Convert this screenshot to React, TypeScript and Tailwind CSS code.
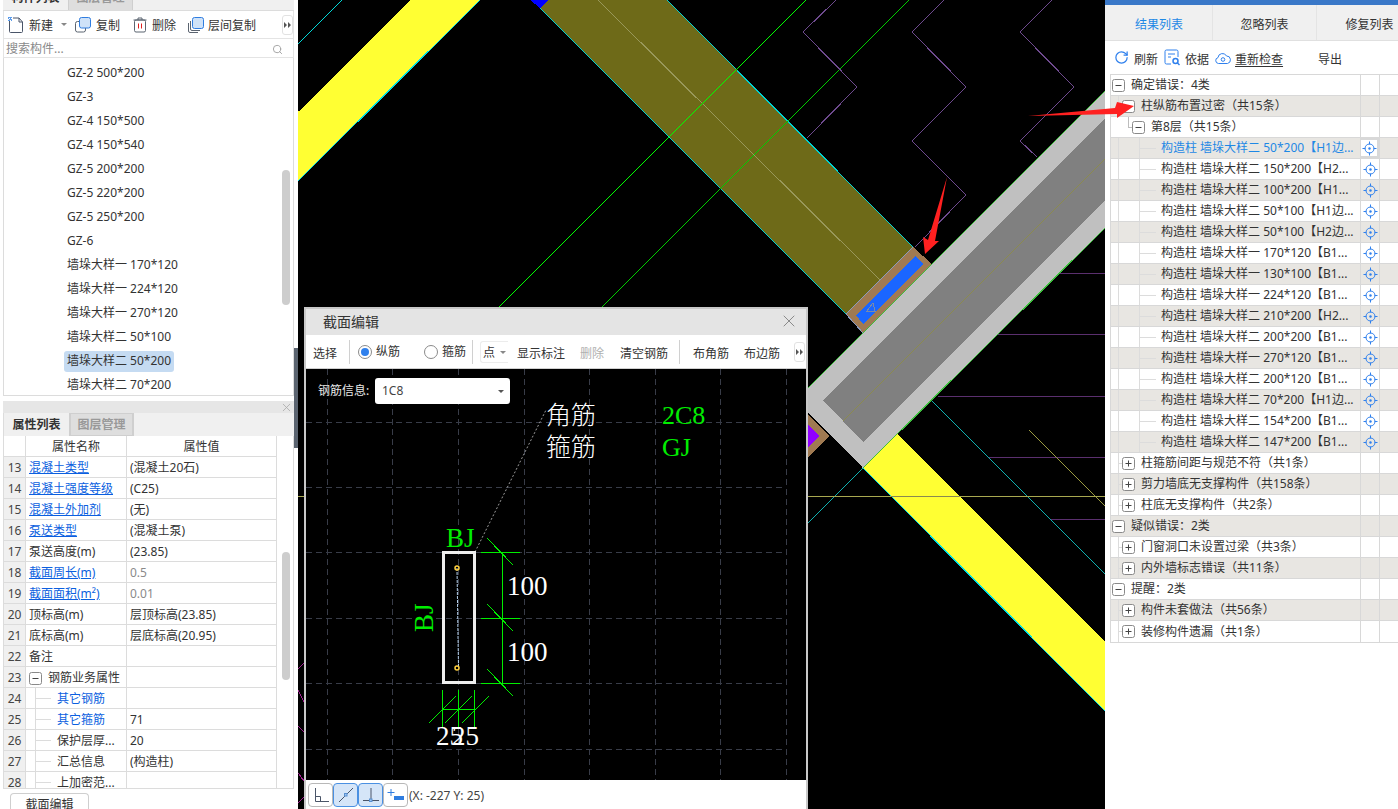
import * as React from 'react'
import { RotateCw, Search, X } from 'lucide-react'

const components = [
  'GZ-2 500*200',
  'GZ-3',
  'GZ-4 150*500',
  'GZ-4 150*540',
  'GZ-5 200*200',
  'GZ-5 220*200',
  'GZ-5 250*200',
  'GZ-6',
  '墙垛大样一 170*120',
  '墙垛大样一 224*120',
  '墙垛大样一 270*120',
  '墙垛大样二 50*100',
  '墙垛大样二 50*200',
  '墙垛大样二 70*200',
]

type Prop = {
  no: number
  name: string
  value?: string
  kind?: 'link' | 'blue'
  muted?: boolean
  indent?: boolean
  box?: boolean
}

const props: Prop[] = [
  { no: 13, name: '混凝土类型', value: '(混凝土20石)', kind: 'link' },
  { no: 14, name: '混凝土强度等级', value: '(C25)', kind: 'link' },
  { no: 15, name: '混凝土外加剂', value: '(无)', kind: 'link' },
  { no: 16, name: '泵送类型', value: '(混凝土泵)', kind: 'link' },
  { no: 17, name: '泵送高度(m)', value: '(23.85)' },
  { no: 18, name: '截面周长(m)', value: '0.5', kind: 'link', muted: true },
  { no: 19, name: '截面面积(m²)', value: '0.01', kind: 'link', muted: true },
  { no: 20, name: '顶标高(m)', value: '层顶标高(23.85)' },
  { no: 21, name: '底标高(m)', value: '层底标高(20.95)' },
  { no: 22, name: '备注' },
  { no: 23, name: '钢筋业务属性', box: true },
  { no: 24, name: '其它钢筋', kind: 'blue', indent: true },
  { no: 25, name: '其它箍筋', value: '71', kind: 'blue', indent: true },
  { no: 26, name: '保护层厚...', value: '20', indent: true },
  { no: 27, name: '汇总信息', value: '(构造柱)', indent: true },
  { no: 28, name: '上加密范...', indent: true },
]

type TreeRow = { level: number; label: string; box?: '+' | '-'; active?: boolean }

const treeRows: TreeRow[] = [
  { level: 0, label: '确定错误：4类', box: '-' },
  { level: 1, label: '柱纵筋布置过密（共15条）', box: '-' },
  { level: 2, label: '第8层（共15条）', box: '-' },
  { level: 3, label: '构造柱 墙垛大样二 50*200【H1边...', active: true },
  { level: 3, label: '构造柱 墙垛大样二 150*200【H2...' },
  { level: 3, label: '构造柱 墙垛大样二 100*200【H1...' },
  { level: 3, label: '构造柱 墙垛大样二 50*100【H1边...' },
  { level: 3, label: '构造柱 墙垛大样二 50*100【H2边...' },
  { level: 3, label: '构造柱 墙垛大样一 170*120【B1...' },
  { level: 3, label: '构造柱 墙垛大样一 130*100【B1...' },
  { level: 3, label: '构造柱 墙垛大样一 224*120【B1...' },
  { level: 3, label: '构造柱 墙垛大样二 210*200【H2...' },
  { level: 3, label: '构造柱 墙垛大样二 200*200【B1...' },
  { level: 3, label: '构造柱 墙垛大样一 270*120【B1...' },
  { level: 3, label: '构造柱 墙垛大样二 200*120【B1...' },
  { level: 3, label: '构造柱 墙垛大样二 70*200【H1边...' },
  { level: 3, label: '构造柱 墙垛大样二 154*200【B1...' },
  { level: 3, label: '构造柱 墙垛大样二 147*200【B1...' },
  { level: 1, label: '柱箍筋间距与规范不符（共1条）', box: '+' },
  { level: 1, label: '剪力墙底无支撑构件（共158条）', box: '+' },
  { level: 1, label: '柱底无支撑构件（共2条）', box: '+' },
  { level: 0, label: '疑似错误：2类', box: '-' },
  { level: 1, label: '门窗洞口未设置过梁（共3条）', box: '+' },
  { level: 1, label: '内外墙标志错误（共11条）', box: '+' },
  { level: 0, label: '提醒：2类', box: '-' },
  { level: 1, label: '构件未套做法（共56条）', box: '+' },
  { level: 1, label: '装修构件遗漏（共1条）', box: '+' },
]

const levelPadding = ['pl-[1px]', 'pl-[11px]', 'pl-[21px]', 'pl-[50px]']

const ExpandBox: React.FC<{ sign: '+' | '-' }> = ({ sign }) => (
  <svg className="shrink-0 mr-[6px]" width="13" height="13" viewBox="0 0 13 13">
    <rect x="0.5" y="0.5" width="12" height="12" rx="2" fill="#fff" stroke="#8a8a8a" />
    <path d="M3.5 6.5h6" stroke="#444" />
    {sign === '+' && <path d="M6.5 3.5v6" stroke="#444" />}
  </svg>
)

const Locate: React.FC = () => (
  <svg width="15" height="15" viewBox="0 0 15 15" fill="none" stroke="#2f80ed">
    <circle cx="7.5" cy="7.5" r="4.5" />
    <path d="M7.5 0.5v3M7.5 11.5v3M0.5 7.5h3M11.5 7.5h3" />
    <circle cx="7.5" cy="7.5" r="1.2" fill="#2f80ed" stroke="none" />
  </svg>
)

const MoreButton: React.FC<{ className?: string }> = ({ className }) => (
  <div
    className={`flex h-[20px] w-[11px] shrink-0 items-center justify-center rounded-[3px] border border-[#e2e2e2] bg-white ${className ?? ''}`}
  >
    <svg width="7" height="6" viewBox="0 0 7 6" fill="#555">
      <path d="M0 0l3 3-3 3zM4 0l3 3-3 3z" />
    </svg>
  </div>
)

const Caret: React.FC<{ color?: string }> = ({ color = '#888' }) => (
  <svg width="6" height="3" viewBox="0 0 6 3" fill={color}>
    <path d="M0 0h6L3 3z" />
  </svg>
)

const NewIcon: React.FC = () => (
  <svg className="shrink-0" width="16" height="16" viewBox="0 0 16 16" fill="none">
    <path d="M1.5 4v10.5a1 1 0 001 1h11a1 1 0 001-1V5L11 1H5" stroke="#4a5568" />
    <path d="M11 1v4h3.5" stroke="#4a5568" />
    <path d="M0 0h4v4H0z" fill="#5b9bea" />
    <path d="M1 1h1v1H1zM3 1h1v1H3zM0 2h1v1H0zM2 3h1v1H2z" fill="#fff" />
  </svg>
)

const CopyIcon: React.FC = () => (
  <svg className="shrink-0" width="16" height="16" viewBox="0 0 16 16" fill="none">
    <rect x="0.5" y="4.5" width="10" height="10.5" rx="2" stroke="#5b6470" />
    <rect x="4.5" y="0.5" width="11" height="10.5" rx="2" fill="#cfe2f8" stroke="#2f7de0" />
  </svg>
)

const TrashIcon: React.FC = () => (
  <svg className="shrink-0" width="14" height="16" viewBox="0 0 14 16" fill="none">
    <path d="M0.5 3h13M5 3V1h4v2" stroke="#5b6470" />
    <rect x="1.5" y="3" width="11" height="12" rx="1.5" stroke="#5b6470" />
    <path d="M5.5 6.5v5M8.5 6.5v5" stroke="#e02020" />
  </svg>
)

const LayerCopyIcon: React.FC = () => (
  <svg className="shrink-0" width="16" height="16" viewBox="0 0 16 16" fill="none">
    <path d="M0.5 6v8a1.5 1.5 0 001.5 1.5h8" stroke="#5b6470" />
    <path d="M2.5 4v8a1.5 1.5 0 001.5 1.5h8" stroke="#5b6470" />
    <rect x="4.5" y="0.5" width="11" height="11" rx="2" fill="#cfe2f8" stroke="#2f7de0" />
  </svg>
)

const Scrollbar: React.FC<{ className: string }> = ({ className }) => (
  <div className={`w-[8px] rounded-full bg-[#cdcdcd] ${className}`} />
)

const LeftPanel: React.FC = () => (
  <aside className="flex h-full w-[298px] shrink-0 bg-white text-[12px] text-[#333]">
    <div className="ml-[3px] flex w-[291px] flex-col">
      <div className="flex h-[11px] overflow-hidden border-b border-[#dcdcdc] bg-[#f0f0f0]">
        <div className="flex h-[11px] w-[65px] items-end justify-center pb-[6px] font-bold">
          <span className="leading-[14px]">构件列表</span>
        </div>
        <div className="flex h-[11px] w-[65px] items-end justify-center border-x border-[#cfcfcf] bg-[#dedede] pb-[6px] font-bold text-[#999]">
          <span className="leading-[14px]">图层管理</span>
        </div>
      </div>
      <div className="flex h-[27px] items-center whitespace-nowrap border-x border-[#e4e4e4] pl-[4px]">
        <NewIcon />
        <span className="ml-[5px] shrink-0 pt-[2px]">新建</span>
        <span className="ml-[8px] mr-[8px]">
          <Caret />
        </span>
        <CopyIcon />
        <span className="ml-[5px] shrink-0 pt-[2px]">复制</span>
        <span className="ml-[13px]">
          <TrashIcon />
        </span>
        <span className="ml-[5px] shrink-0 pt-[2px]">删除</span>
        <span className="ml-[12px]">
          <LayerCopyIcon />
        </span>
        <span className="ml-[4px] shrink-0 pt-[2px]">层间复制</span>
        <MoreButton className="ml-[26px]" />
      </div>
      <div className="flex h-[20px] items-center justify-between border border-[#e4e4e4] pl-[2px] pr-[10px] pt-[2px] text-[#8a8a8a]">
        <span>搜索构件...</span>
        <Search size={11} strokeWidth={2} color="#a0a0a0" />
      </div>
      <div className="flex h-[338px] border border-t-0 border-[#dcdcdc]">
        <ul className="flex w-[278px] flex-col pt-[3px]">
          {components.map(name => (
            <li className="flex h-[24px] shrink-0 items-center pl-[60px]" key={name}>
              <span
                className={`flex h-[21px] items-center rounded-[3px] px-[3px] ${
                  name === '墙垛大样二 50*200' ? 'bg-[#c5dbf2]' : ''
                }`}
              >
                {name}
              </span>
            </li>
          ))}
        </ul>
        <Scrollbar className="mt-[112px] h-[135px]" />
      </div>
      <div className="mt-[5px] flex h-[12px] items-center justify-end bg-[#e6e6e6] pr-px">
        <X size={13} strokeWidth={1.5} color="#aaa" />
      </div>
      <div className="flex h-[23px] border-l border-[#dcdcdc] bg-[#f0f0f0]">
        <div className="flex w-[65px] items-center justify-center font-bold">属性列表</div>
        <div className="flex w-[65px] items-center justify-center border-x-2 border-y border-[#cfcfcf] bg-[#dedede] font-bold text-[#999]">
          图层管理
        </div>
      </div>
      <div className="flex h-[353px] overflow-hidden border border-t-0 border-[#dcdcdc]">
        <div className="w-[273px] shrink-0 border-r border-[#dcdcdc]">
          <div className="flex h-[21px] border-b border-[#dcdcdc]">
            <div className="w-[22px] border-r border-[#dcdcdc]" />
            <div className="flex w-[101px] items-center justify-center border-r border-[#dcdcdc] pt-[2px]">属性名称</div>
            <div className="flex flex-1 items-center justify-center pt-[2px]">属性值</div>
          </div>
          {props.map(p => (
            <div className="flex h-[21px] border-b border-[#dcdcdc]" key={p.no}>
              <div className="flex w-[22px] items-center justify-center border-r border-[#dcdcdc] bg-[#f0f0f0] pt-[2px] text-[#444]">
                {p.no}
              </div>
              <div
                className={`relative flex w-[101px] items-center border-r border-[#dcdcdc] pt-[2px] ${
                  p.indent ? 'pl-[31px]' : 'pl-[3px]'
                } ${p.kind ? 'text-[#0b5fe0]' : ''} ${p.kind === 'link' ? 'underline' : ''}`}
              >
                {p.indent && (
                  <>
                    <span className="absolute bottom-0 left-[9px] top-0 w-px bg-[#dcdcdc]" />
                    <span className="absolute left-[9px] top-[10px] h-px w-[16px] bg-[#dcdcdc]" />
                  </>
                )}
                {p.box && <ExpandBox sign="-" />}
                {p.name}
              </div>
              <div className={`flex flex-1 items-center pl-[3px] pt-[2px] ${p.muted ? 'text-[#8a8a8a]' : ''}`}>
                {p.value}
              </div>
            </div>
          ))}
        </div>
        <Scrollbar className="ml-[5px] mt-[116px] h-[128px]" />
      </div>
      <div className="ml-[7px] mt-[4px] flex h-[16px] w-[79px] items-start justify-center rounded-t-[4px] border border-b-0 border-[#cfcfcf] pt-[2px]">
        截面编辑
      </div>
    </div>
    <div className="w-[4px] pt-[348px]">
      <div className="h-[100px] bg-[#5b6470]" />
    </div>
  </aside>
)

const CadCanvas: React.FC = () => (
  <svg className="block h-full w-full" viewBox="298 0 807 809" fill="none" shapeRendering="crispEdges">
    <rect x="298" y="0" width="807" height="809" fill="#000" />
    <path d="M298 669l6-6M298 690l6 12M298 726l6 6M298 773l6 8M298 803l6-6" stroke="#a02090" />
    <path d="M342 0L298 44" stroke="#00d8d8" />
    <polygon points="411,0 480,0 298,181 298,112" fill="#ffff33" />
    <path d="M480 0L298 181" stroke="#00e0e0" />

    <polygon points="548,0 667,0 913,247 846,314 540,8" fill="#6e6a18" />
    <polygon points="530,0 548,0 540,8" fill="#0000ff" />
    <path d="M540 8L846 314M667 0L913 247" stroke="#00d0d0" />
    <path d="M598 0L880 280" stroke="#99985a" />

    <path d="M806 0L499 307" stroke="#00ff00" />
    <path d="M909 0L602 307" stroke="#00cc00" />

    <g stroke="#6e4a8e">
      <polyline points="836,0 803,32 857,87 807,138" />
      <polyline points="944,0 912,32 966,87 912,141 966,195 915,247" />
      <polyline points="1052,0 1020,32 1074,87 1020,141 1037,157" />
    </g>
    <path d="M1060 273.5H1105M998 334.5H1105M938 396.5H1105M988 457.5H1105M1050 519.5H1105" stroke="#5a2f6e" />

    <path d="M932 401L1105 574M863 468L760 571" stroke="#10b0b0" />
    <path d="M1029 430L1105 506" stroke="#9a9a40" />

    <polygon points="897,434 1105,642 1105,711 863,468" fill="#ffff33" />
    <path d="M863 468L1105 711" stroke="#00e0e0" />
    <path d="M298 496.5H891M959 496.5H1105" stroke="#a8a850" />
    <path d="M891 496.5H959" stroke="#8a8a50" />

    <polygon points="913,247 932,264 863,333 846,314" fill="#a07a52" />
    <polygon points="915,256 923,264 863,324 856,315" fill="#1a66ff" />
    <path d="M913 247L846 314L863 333" stroke="#8a9ac0" />
    <path d="M873 303L867 311L875 311Z" stroke="#7a8aa8" />

    <polygon points="808,415 830,436 808,457" fill="#a07a52" />
    <polygon points="808,425 820,436 808,447" fill="#9000ff" />
    <polygon points="1105,91 1105,228 863,468 796,400" fill="#c0c0c0" />
    <polygon points="1105,118 1105,200 863,442 823,400" fill="#808080" />
    <path d="M843 421L1105 159" stroke="#8a8a50" />
    <path d="M1105 91L796 400M1105 228L863 468" stroke="#3fbf3f" />
  </svg>
)

const gridX = [327, 392, 458, 524, 589, 655, 720, 786]
const gridY = [422, 487, 552, 618, 683, 749]
const tickRight = [552, 618, 683]
const tickBottom = [429, 445, 462]

const SectionDrawing: React.FC = () => (
  <svg className="block h-full w-full" viewBox="306 369 500 411" fill="none">
    <g stroke="#383c48" strokeDasharray="6 4" shapeRendering="crispEdges">
      {gridX.map(x => (
        <path d={`M${x + 0.5} 369V780`} key={x} />
      ))}
      {gridY.map(y => (
        <path d={`M306 ${y + 0.5}H786`} key={y} />
      ))}
    </g>
    <path d="M475 552L546 410" stroke="#9a9a9a" strokeDasharray="2 2" />
    <rect x="443.5" y="552.5" width="31" height="130" stroke="#eeeeee" strokeWidth="3" />
    <path d="M457 568L458.5 668" stroke="#b8d4f0" strokeDasharray="3 1" />
    <g stroke="#ffd040" strokeWidth="1.5">
      <circle cx="457" cy="568" r="2" />
      <circle cx="457" cy="668" r="2" />
    </g>
    <g stroke="#00ee00" shapeRendering="crispEdges">
      <path d="M502.5 552V683" />
      {tickRight.map(y => (
        <g key={y}>
          <path d={`M481 ${y + 0.5}H520`} />
          <path d={`M487 ${y - 14}L513 ${y + 13}`} />
        </g>
      ))}
      <path d="M442.5 690V727M458.5 690V727M474.5 690V727M442 709.5H475" />
      {tickBottom.map(x => (
        <path d={`M${x} 723L${x + 27} 696`} key={x} />
      ))}
    </g>
    <g fontFamily="'Liberation Serif', serif" fontSize="27">
      <text x="446" y="547" fill="#00ee00">BJ</text>
      <text transform="translate(433 632) rotate(-90)" fill="#00ee00">BJ</text>
      <text x="662" y="424" fill="#00ee00" fontSize="26">2C8</text>
      <text x="662" y="456" fill="#00ee00" fontSize="26">GJ</text>
      <text x="507" y="595" fill="#fff">100</text>
      <text x="507" y="661" fill="#fff">100</text>
      <text x="436" y="745" fill="#fff">25</text>
      <text x="452" y="745" fill="#fff">25</text>
    </g>
    <g fontFamily="'Noto Sans CJK SC', sans-serif" fontSize="25" fontWeight="300" fill="#fff">
      <text x="546" y="424">角筋</text>
      <text x="546" y="456">箍筋</text>
    </g>
  </svg>
)

const Radio: React.FC<{ on?: boolean }> = ({ on }) => (
  <svg width="14" height="14" viewBox="0 0 14 14" fill="none">
    <circle cx="7" cy="7" r="6.5" fill="#fff" stroke="#8a8a8a" />
    {on && <circle cx="7" cy="7" r="4" fill="#2f80ed" />}
  </svg>
)

const Sep: React.FC<{ className?: string }> = ({ className }) => (
  <span className={`h-[24px] w-px bg-[#d0d0d0] ${className ?? ''}`} />
)

const SnapButton: React.FC<{ on?: boolean; children: React.ReactNode }> = ({ on, children }) => (
  <div
    className={`flex h-[24px] w-[25px] items-center justify-center rounded-[4px] border ${
      on ? 'border-[#4a90e2] bg-[#d5e5f8]' : 'border-[#b8b8b8] bg-white'
    }`}
  >
    {children}
  </div>
)

const SectionDialog: React.FC = () => (
  <section className="absolute left-[6px] top-[307px] flex h-[502px] w-[504px] flex-col border-x-2 border-t-2 border-[#c8c8c8] bg-white text-[12px] text-[#333]">
    <header className="flex h-[26px] shrink-0 items-center justify-between bg-[#e4e4e4] pb-[2px] pl-[17px] pr-[7px]">
      <span className="text-[14px]">截面编辑</span>
      <X size={20} strokeWidth={1} color="#777" />
    </header>
    <div className="flex h-[34px] shrink-0 items-center border-b border-[#d0d0d0] pl-[7px]">
      <span className="pt-[4px]">选择</span>
      <Sep className="ml-[12px]" />
      <span className="ml-[8px]">
        <Radio on />
      </span>
      <span className="ml-[4px]">纵筋</span>
      <span className="ml-[24px]">
        <Radio />
      </span>
      <span className="ml-[4px]">箍筋</span>
      <Sep className="ml-[6px]" />
      <span className="ml-[7px] flex h-[22px] w-[28px] items-center gap-[5px] rounded-l-[3px] border border-r-0 border-[#ececec] pl-[2px] pt-[2px]">
        点
        <Caret />
      </span>
      <span className="ml-[9px] pt-[4px]">显示标注</span>
      <span className="ml-[15px] pt-[4px] text-[#b0b0b0]">删除</span>
      <span className="ml-[16px] pt-[4px]">清空钢筋</span>
      <Sep className="ml-[11px]" />
      <span className="ml-[13px] pt-[4px]">布角筋</span>
      <span className="ml-[15px] pt-[4px]">布边筋</span>
      <MoreButton className="ml-[14px]" />
    </div>
    <div className="relative h-[411px] shrink-0 bg-black">
      <SectionDrawing />
      <div className="absolute left-[12px] top-[9px] flex items-center text-[#e8e8e8]">
        <span className="w-[57px]">钢筋信息:</span>
        <div className="flex h-[26px] w-[135px] items-center justify-between rounded-[3px] bg-white pl-[7px] pr-[6px] text-[#444]">
          1C8
          <Caret color="#555" />
        </div>
      </div>
    </div>
    <div className="flex flex-1 items-center pl-[2px] text-[#444]">
      <SnapButton>
        <svg width="18" height="16" viewBox="0 0 18 16" fill="none" stroke="#4a5568">
          <path d="M3.5 1v13.5H17M3.5 9.5h5v5" />
        </svg>
      </SnapButton>
      <SnapButton on>
        <svg width="18" height="16" viewBox="0 0 18 16" fill="none" stroke="#4a5568">
          <path d="M2 15L16 1" />
          <rect x="7.5" y="6.5" width="2.5" height="2.5" fill="#9cc4f0" stroke="#5a90d0" />
        </svg>
      </SnapButton>
      <SnapButton on>
        <svg width="18" height="16" viewBox="0 0 18 16" fill="none" stroke="#4a5568">
          <path d="M1 13.5H17M9 1v12" />
          <rect x="7.5" y="12" width="2.5" height="2.5" fill="#9cc4f0" stroke="#5a90d0" />
        </svg>
      </SnapButton>
      <SnapButton>
        <svg width="18" height="14" viewBox="0 0 18 14" fill="none">
          <path d="M4 1v7M0.5 4.5h7" stroke="#2f7de0" />
          <rect x="7" y="8" width="10" height="4" fill="#2f7de0" />
        </svg>
      </SnapButton>
      <span className="ml-px pt-[2px]">(X: -227 Y: 25)</span>
    </div>
  </section>
)

const RightPanel: React.FC = () => (
  <aside className="flex h-full w-[293px] shrink-0 flex-col overflow-hidden bg-white text-[12px] text-[#333]">
    <div className="h-[5px] shrink-0 bg-[#3a78c8]" />
    <nav className="flex h-[36px] shrink-0 items-center border-b border-[#e0e0e0] bg-[#f0f0f0] pl-px">
      <span className="flex h-full w-[106px] shrink-0 items-center justify-center pt-[4px] text-[#1e88e5]">结果列表</span>
      <span className="flex h-full w-[105px] shrink-0 items-center justify-center border-x border-[#e4e4e4] pt-[4px]">忽略列表</span>
      <span className="flex h-full w-[105px] shrink-0 items-center justify-center pt-[4px]">修复列表</span>
    </nav>
    <div className="flex h-[33px] shrink-0 items-center pl-[9px]">
      <RotateCw size={15} color="#2f80ed" strokeWidth={2} />
      <span className="ml-[5px] pt-[4px]">刷新</span>
      <svg className="ml-[6px]" width="17" height="17" viewBox="0 0 17 17" fill="none" stroke="#2f80ed">
        <path d="M7 15H2.5a1.5 1.5 0 01-1.5-1.5v-11A1.5 1.5 0 012.5 1h10A1.5 1.5 0 0114 2.500V8" />
        <path d="M4 5h7M4 8h3" />
        <circle cx="11.500" cy="12" r="2.500" strokeWidth="1.5" />
        <path d="M13.500 14l2 2" strokeWidth="1.5" />
      </svg>
      <span className="ml-[4px] pt-[4px]">依据</span>
      <svg className="ml-[6px]" width="16" height="12" viewBox="0 0 16 12" fill="none" stroke="#2f80ed">
        <path d="M4 11.500H3.500a3 3 0 01-.5-5.900A4.500 4.500 0 0111.500 4a3.800 3.800 0 011 7.500z" />
        <circle cx="8" cy="7.500" r="1.800" />
      </svg>
      <span className="ml-[4px] pt-[4px] underline underline-offset-2">重新检查</span>
      <span className="ml-[35px] pt-[4px]">导出</span>
    </div>
    <div className="ml-[5px] w-[288px] border-y border-l border-[#d8d8d8]">
      {treeRows.map((row, i) => (
        <div
          className={`flex h-[21px] border-b border-[#d8d8d8] last:border-b-0 ${i % 2 === 1 ? 'bg-[#e8e6e2]' : 'bg-white'}`}
          key={`${row.label}${i}`}
        >
          <div
            className={`relative flex w-[250px] items-center whitespace-nowrap ${levelPadding[row.level]} ${
              row.active ? 'text-[#1e88e5]' : ''
            }`}
          >
            {(row.level === 1 || row.level === 3) && (
              <span className="absolute bottom-0 left-[7px] top-0 w-px bg-[#dcdcdc]" />
            )}
            {row.level === 1 && <span className="absolute left-[7px] top-[10px] h-px w-[4px] bg-[#dcdcdc]" />}
            {row.level === 2 && (
              <>
                <span className="absolute left-[17px] top-0 h-[11px] w-px bg-[#bdbdbd]" />
                <span className="absolute left-[17px] top-[10px] h-px w-[4px] bg-[#bdbdbd]" />
              </>
            )}
            {row.level === 3 && (
              <>
                <span className="absolute bottom-0 left-[28px] top-0 w-px bg-[#dcdcdc]" />
                <span className="absolute left-[28px] top-[10px] h-px w-[17px] bg-[#dcdcdc]" />
              </>
            )}
            {row.box && <ExpandBox sign={row.box} />}
            <span>{row.label}</span>
          </div>
          <div
            className={`flex w-[19px] items-center justify-center border-l border-[#d8d8d8] ${
              row.active ? 'border-2 border-[#7a7a7a] bg-white' : ''
            }`}
          >
            {row.level === 3 && <Locate />}
          </div>
          <div className="w-[19px] border-l border-[#d8d8d8]" />
        </div>
      ))}
    </div>
  </aside>
)

export default function App() {
  return (
    <div className="relative flex h-[809px] w-[1398px] overflow-hidden bg-black font-['Noto_Sans','Noto_Sans_CJK_SC',sans-serif]">
      <LeftPanel />
      <main className="relative h-full w-[807px] shrink-0">
        <CadCanvas />
        <SectionDialog />
      </main>
      <RightPanel />
      <svg className="pointer-events-none absolute inset-0" width="1398" height="809" viewBox="0 0 1398 809">
        <polygon points="1028,116 1115,108 1117,102 1134,106 1117,118 1117,114" fill="#ff2020" />
        <polygon points="947,177 935,241 939,241 925,254 923,237 928,240" fill="#ff2020" />
      </svg>
    </div>
  )
}
